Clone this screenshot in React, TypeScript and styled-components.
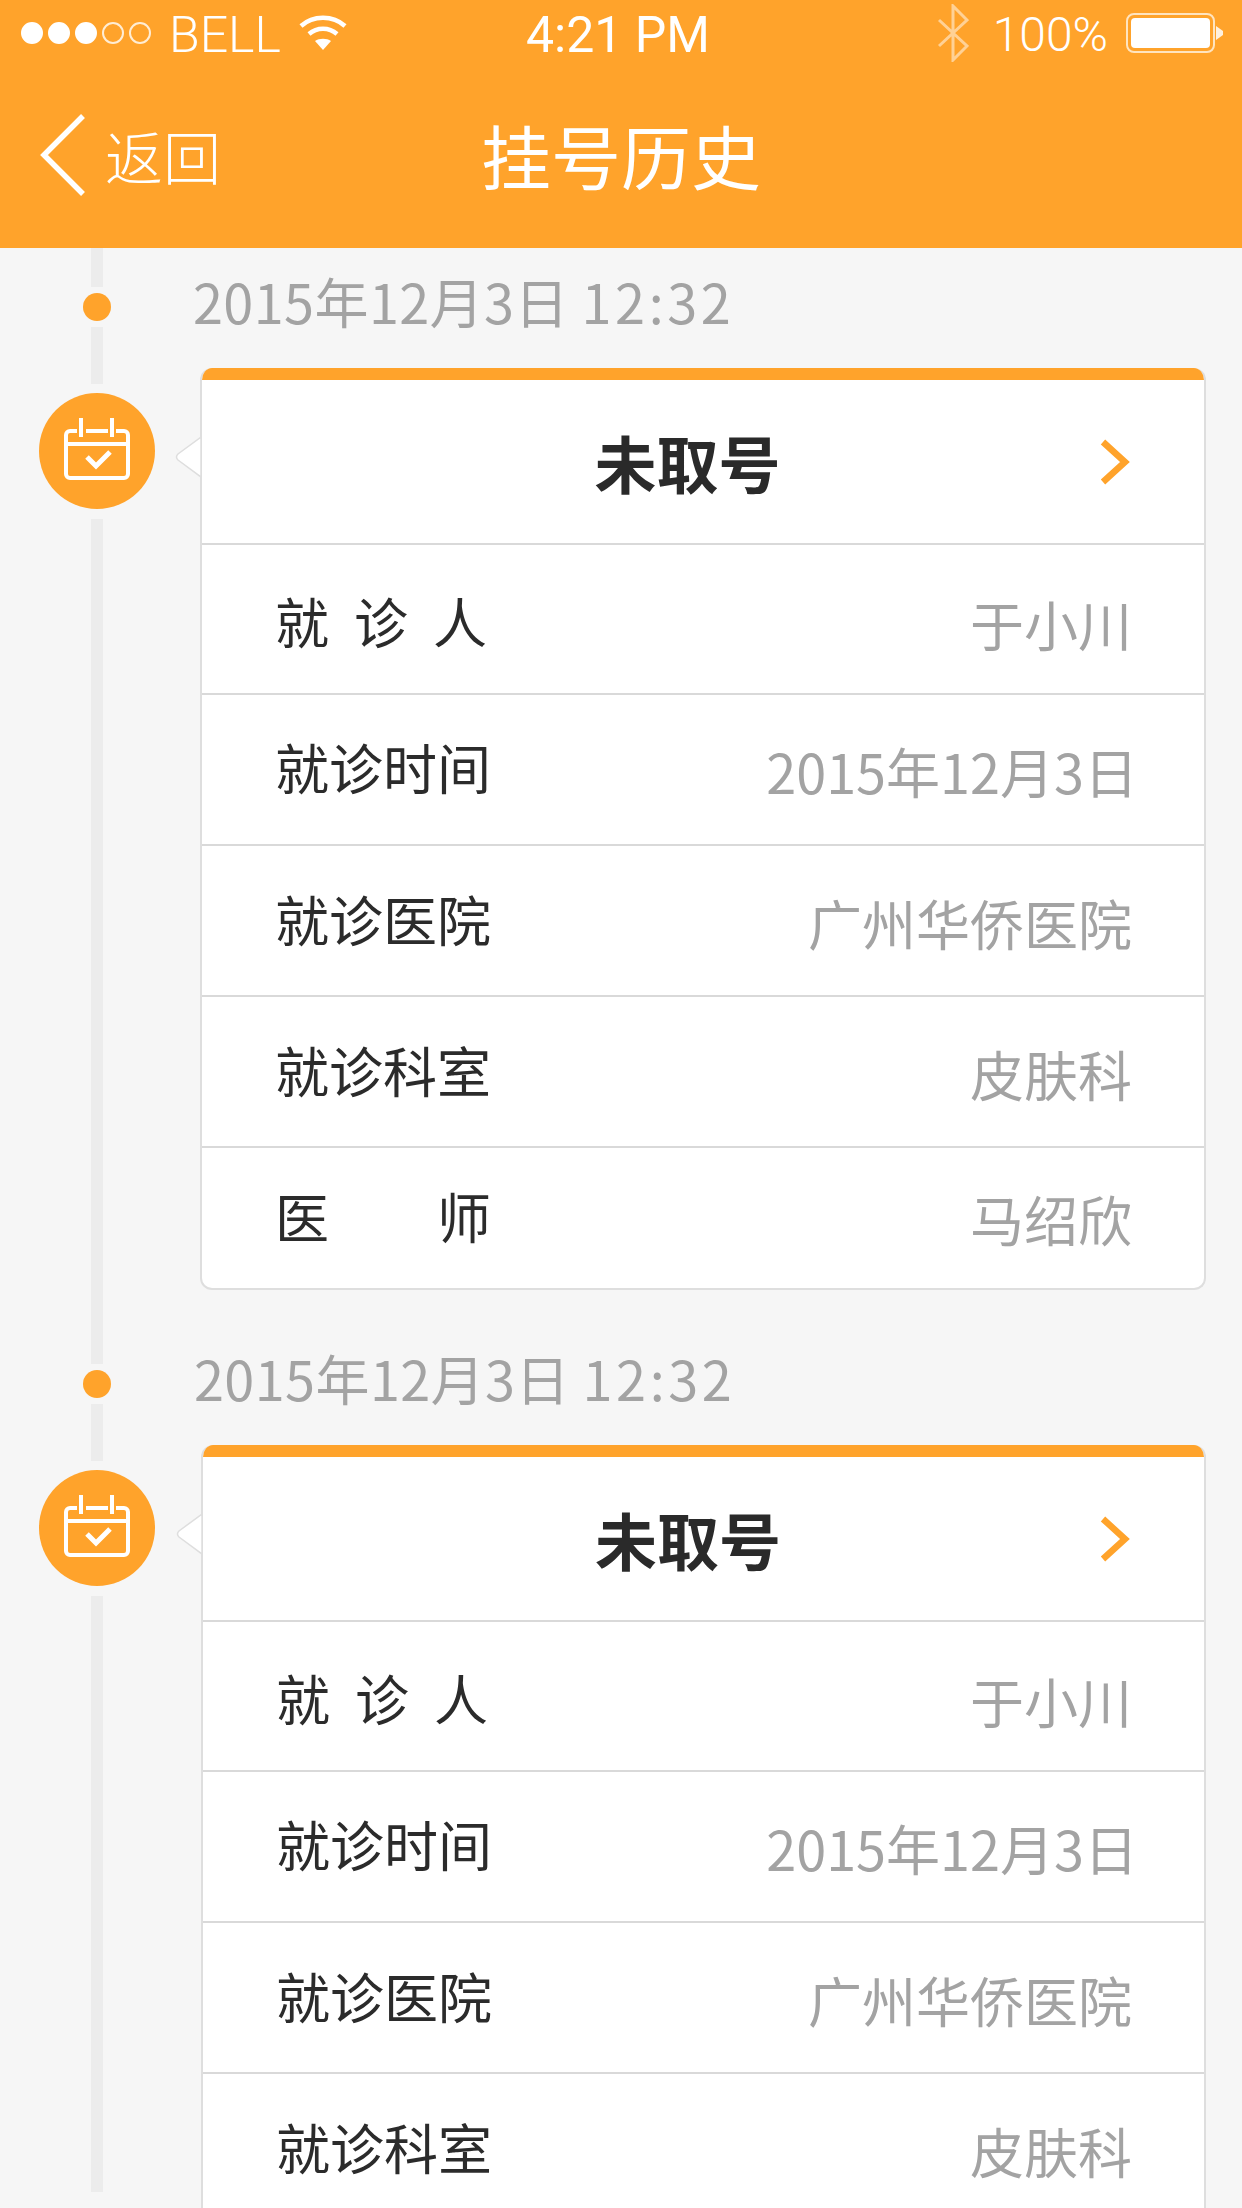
import React from "react";
import styled, { createGlobalStyle } from "styled-components";

const ORANGE = "#ffa32b";
const CJK = `"Noto Sans CJK SC", "Noto Sans", sans-serif`;

const Global = createGlobalStyle`
  html, body { margin: 0; padding: 0; background: #f6f6f6; }
  * { box-sizing: border-box; }
`;

const Page = styled.div`
  width: 1242px;
  height: 2208px;
  overflow: hidden;
  background: #f6f6f6;
  font-family: ${CJK};
`;

const Header = styled.header`
  height: 248px;
  background: ${ORANGE};
  color: #fff;
  display: flex;
  flex-direction: column;
`;

const StatusBar = styled.div`
  height: 66px;
  display: grid;
  grid-template-columns: 1fr auto 1fr;
  align-items: center;
  padding: 0 21px;
  font-family: "Roboto", "Liberation Sans", sans-serif;
  font-weight: 300;
  font-size: 50px;
  line-height: 66px;
`;

const StatusLeft = styled.div`
  display: flex;
  align-items: center;
`;

const StatusRight = styled.div`
  display: flex;
  align-items: center;
  justify-content: flex-end;
  margin-right: -2px;
`;

const StatusText = styled.span`
  position: relative;
  top: 2px;
`;

const SignalDots = styled.div`
  display: flex;
  gap: 5px;
  margin-right: 18px;
`;

const SignalDot = styled.span<{ $on: boolean }>`
  width: 22px;
  height: 22px;
  border-radius: 50%;
  border: 2px solid #fff;
  background: ${(p) => (p.$on ? "#fff" : "transparent")};
  opacity: ${(p) => (p.$on ? 1 : 0.8)};
`;

const Carrier = styled(StatusText)`
  margin-right: 18px;
`;

const Clock = styled(StatusText)`
  font-weight: 400;
  margin-left: -6px;
`;

const Percent = styled(StatusText)`
  font-size: 48px;
  margin: 0 18px 0 24px;
`;

const NavBar = styled.nav`
  flex: 1;
  display: grid;
  grid-template-columns: 1fr auto 1fr;
  align-items: center;
  padding: 0 40px 4px;
`;

const BackLink = styled.div`
  display: flex;
  align-items: center;
  gap: 19px;
  font-size: 58px;
  font-weight: 300;
  line-height: 1;
`;

const Title = styled.h1`
  margin: 0;
  font-size: 70px;
  font-weight: 400;
  line-height: 1;
`;

const Entry = styled.section`
  display: flex;
  align-items: stretch;
  height: 1077px;
`;

const Rail = styled.div<{ $height?: number }>`
  flex: none;
  width: 194px;
  height: ${(p) => (p.$height ? `${p.$height}px` : "auto")};
  display: flex;
  flex-direction: column;
  align-items: center;
`;

const RailLine = styled.div<{ $h?: number }>`
  width: 12px;
  background: #ececec;
  flex: ${(p) => (p.$h ? `0 0 ${p.$h}px` : "1")};
`;

const RailDot = styled.div`
  flex: none;
  width: 28px;
  height: 28px;
  border-radius: 50%;
  background: ${ORANGE};
  margin: 6px 0;
`;

const RailBadge = styled.div`
  flex: none;
  width: 116px;
  height: 116px;
  margin: 9px 0 10px;
  border-radius: 50%;
  background: ${ORANGE};
  display: flex;
  align-items: center;
  justify-content: center;
  padding-bottom: 5px;
`;

const Body = styled.div<{ $nudge: number }>`
  flex: 1;
  min-width: 0;
  padding-left: ${(p) => p.$nudge}px;
`;

const DateLine = styled.div`
  height: 120px;
  padding: 18px 0 0 0;
  margin-left: -1px;
  font-size: 54px;
  font-weight: 400;
  letter-spacing: 0.4px;
  line-height: 70px;
  color: #a3a3a3;
  white-space: nowrap;
`;

const DateTime = styled.span`
  margin-left: -3px;
  letter-spacing: 3.6px;
`;

const CardWrap = styled.div`
  position: relative;
  margin: 0 36px 0 6px;
`;

const Pointer = styled.svg`
  position: absolute;
  left: -25px;
  top: 68px;
`;

const Card = styled.div`
  background: #fff;
  border: 2px solid #dedede;
  border-top: none;
  border-radius: 12px;
  overflow: hidden;
`;

const CardTop = styled.div`
  height: 12px;
  background: ${ORANGE};
`;

const CardHead = styled.div`
  height: 163px;
  display: flex;
  align-items: center;
  padding: 0 74px 0 73px;
`;

const Status = styled.div`
  flex: 1;
  text-align: center;
  font-size: 62px;
  font-weight: 700;
  color: #2a2a2a;
  line-height: 1;
`;

const Row = styled.div<{ $h: number }>`
  height: ${(p) => p.$h}px;
  border-top: 2px solid #d9d9d9;
  display: flex;
  align-items: center;
  justify-content: space-between;
  padding: 0 72px 0 73px;
`;

const Label = styled.span<{ $w: number; $dy: number }>`
  width: ${(p) => p.$w}px;
  font-size: 54px;
  font-weight: 400;
  line-height: 1;
  color: #2b2b2b;
  text-align: justify;
  text-align-last: justify;
  margin-top: ${(p) => p.$dy}px;
`;

const Value = styled.span<{ $dy: number; $digits?: boolean }>`
  font-size: 54px;
  font-weight: 400;
  line-height: 1;
  color: #a3a3a3;
  margin-top: ${(p) => p.$dy}px;
  margin-right: ${(p) => (p.$digits ? "-6px" : "0")};
`;

const CalendarIcon = () => (
  <svg width="66" height="62" viewBox="0 0 66 62" fill="none" stroke="#fff" strokeWidth="4">
    <path d="M13 13H6a4 4 0 0 0-4 4v39a4 4 0 0 0 4 4h54a4 4 0 0 0 4-4V17a4 4 0 0 0-4-4h-8M44 13H22" />
    <path d="M2 26H64M17 0V19M48 0V19" />
    <path d="M23 39L32 48L46 34" strokeWidth="5" />
  </svg>
);

const rows: { k: string; v: string; h: number; dy: number; lw: number; ldy: number; digits?: boolean }[] = [
  { k: "就诊人", v: "于小川", h: 150, dy: 10, lw: 212, ldy: 4 },
  { k: "就诊时间", v: "2015年12月3日", h: 151, dy: 2, lw: 216, ldy: -6, digits: true },
  { k: "就诊医院", v: "广州华侨医院", h: 151, dy: 4, lw: 216, ldy: -4 },
  { k: "就诊科室", v: "皮肤科", h: 151, dy: 4, lw: 216, ldy: -4 },
  { k: "医师", v: "马绍欣", h: 142, dy: 2, lw: 216, ldy: -4 },
];

const TimelineEntry = ({ nudge, railHeight }: { nudge: number; railHeight?: number }) => (
  <Entry>
    <Rail $height={railHeight}>
      <RailLine $h={39} />
      <RailDot />
      <RailLine $h={57} />
      <RailBadge>
        <CalendarIcon />
      </RailBadge>
      <RailLine />
    </Rail>
    <Body $nudge={nudge}>
      <DateLine>
        2015年12月3日<DateTime> 12:32</DateTime>
      </DateLine>
      <CardWrap>
        <Pointer width="26" height="42" viewBox="0 0 26 42">
          <path d="M26 1L3 18Q0 21 3 24L26 41Z" fill="#fff" stroke="#dedede" strokeWidth="1.5" />
        </Pointer>
        <Card>
          <CardTop />
          <CardHead>
            <Status>未取号</Status>
            <svg width="30" height="46" viewBox="0 0 30 46" fill="none" stroke={ORANGE} strokeWidth="6.5">
              <path d="M3 3L25 23L3 43" />
            </svg>
          </CardHead>
          {rows.map((r) => (
            <Row key={r.k} $h={r.h}>
              <Label $w={r.lw} $dy={r.ldy}>
                {r.k}
              </Label>
              <Value $dy={r.dy} $digits={r.digits}>
                {r.v}
              </Value>
            </Row>
          ))}
        </Card>
      </CardWrap>
    </Body>
  </Entry>
);

export default function App() {
  return (
    <Page>
      <Global />
      <Header>
        <StatusBar>
          <StatusLeft>
            <SignalDots>
              {[1, 1, 1, 0, 0].map((on, i) => (
                <SignalDot key={i} $on={!!on} />
              ))}
            </SignalDots>
            <Carrier>BELL</Carrier>
            <svg width="48" height="36" viewBox="0 0 48 36" fill="none" stroke="#fff" strokeWidth="4.5">
              <path d="M2 11C14 0 34 0 46 11" />
              <path d="M10 19C18 12 30 12 38 19" />
              <path d="M24 35L16 26C20 23 28 23 32 26Z" fill="#fff" stroke="none" />
            </svg>
          </StatusLeft>
          <Clock>4:21 PM</Clock>
          <StatusRight>
            <svg width="32" height="58" viewBox="0 0 32 58" fill="none" stroke="#fff" strokeWidth="3" opacity="0.5">
              <path d="M2 16L30 42L16 56V2L30 16L2 42" />
            </svg>
            <Percent>100%</Percent>
            <svg width="97" height="40" viewBox="0 0 97 40" fill="none">
              <rect x="1" y="1" width="87" height="38" rx="7" stroke="#fff" strokeWidth="2" opacity="0.7" />
              <rect x="5" y="5" width="79" height="30" rx="4" fill="#fff" />
              <path d="M90 13L97 18V22L90 27Z" fill="#fff" opacity="0.85" />
            </svg>
          </StatusRight>
        </StatusBar>
        <NavBar>
          <BackLink>
            <svg width="46" height="84" viewBox="0 0 46 84" fill="none" stroke="#fff" strokeWidth="5.5">
              <path d="M43 3L4 42L43 81" />
            </svg>
            <span>返回</span>
          </BackLink>
          <Title>挂号历史</Title>
          <span />
        </NavBar>
      </Header>
      <TimelineEntry nudge={0} />
      <TimelineEntry nudge={1} railHeight={867} />
    </Page>
  );
}
